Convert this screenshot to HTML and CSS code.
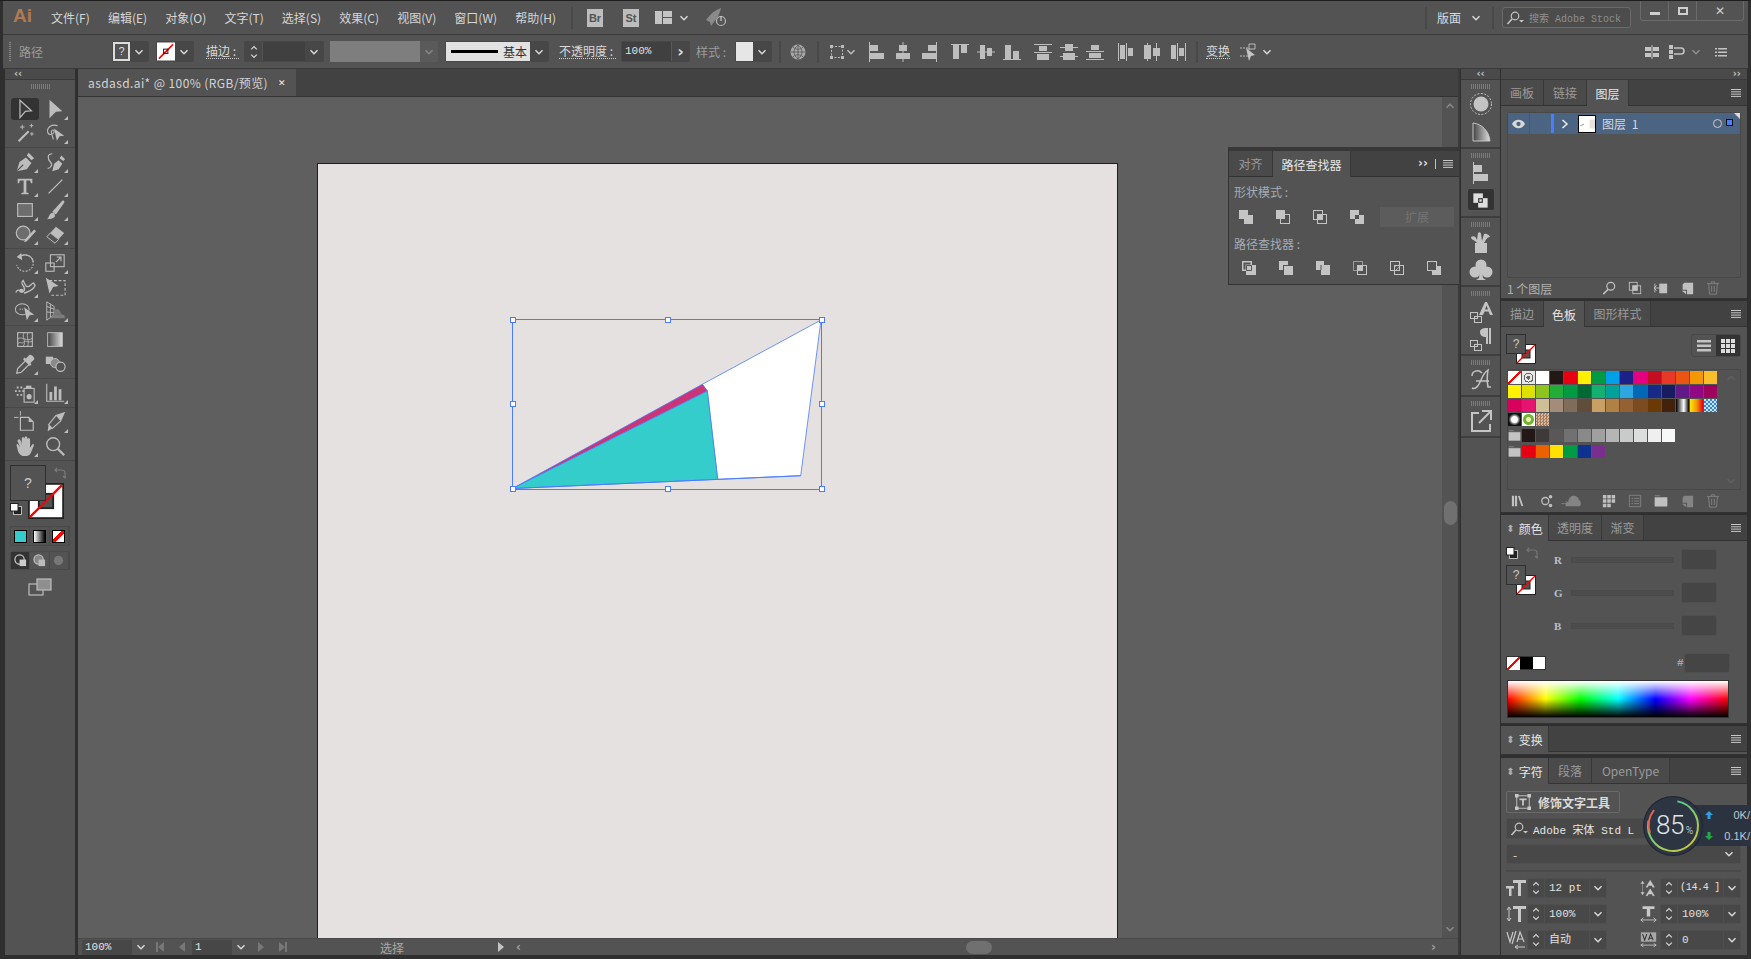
FILE: index.html
```html
<!DOCTYPE html>
<html lang="zh-CN">
<head>
    <meta charset="UTF-8">
    <title>asdasd.ai</title>
    <link rel="stylesheet" href="styles.css">
</head>
<body>
<svg class="sprite" xmlns="http://www.w3.org/2000/svg">
    <defs>
        <linearGradient id="gr" x1="0" x2="1" y1="0" y2="0"><stop offset="0" stop-color="#444"/><stop offset="1" stop-color="#ddd"/></linearGradient>
        <linearGradient id="ring" x1="0" x2="1" y1="1" y2="0"><stop offset="0" stop-color="#e3c53a"/><stop offset=".5" stop-color="#7ecb6a"/><stop offset="1" stop-color="#2fd0b5"/></linearGradient>
    </defs>
    <symbol id="chev" viewBox="0 0 10 10"><path d="M1.500 3.200 5 6.700 8.500 3.200" fill="none" stroke="currentColor" stroke-width="1.500"/></symbol>
    <symbol id="menu" viewBox="0 0 12 10"><path d="M1 1.500h10M1 3.800h10M1 6.100h10M1 8.400h10" stroke="currentColor"/></symbol>
    <!-- tools -->
    <symbol id="t-sel" viewBox="0 0 24 24"><path d="M6.500 2.500 19 14l-6.500.5-6 7z" fill="#3a3a3a" stroke="currentColor" stroke-width="1.300"/></symbol>
    <symbol id="t-dsel" viewBox="0 0 24 24"><path d="M6 2 20 14.500l-7 .5-7 7z" fill="currentColor"/></symbol>
    <symbol id="t-wand" viewBox="0 0 24 24"><path d="M5 21 16 10" stroke="currentColor" stroke-width="2.400"/><path d="M9 3v5M6.500 5.500h5M19 2v4M17 4h4M19.500 11v4M17.500 13h4" stroke="currentColor"/></symbol>
    <symbol id="t-lasso" viewBox="0 0 24 24"><path d="M15 4C8 2 3 6 4 11c1 4 6 3 7 0 .5-3-3-3-3 0 0 3 2 5 2 8" fill="none" stroke="currentColor" stroke-width="1.200"/><path d="M11 7l11 8-5 .5-3 5z" fill="currentColor"/></symbol>
    <symbol id="t-pen" viewBox="0 0 24 24"><path d="M3 22l3-10 7-5 6 6-5 7z" fill="currentColor"/><path d="M14 5l2-3 6 6-3 2z" fill="currentColor"/><path d="M3.500 21.500 10 15" stroke="#535353" stroke-width="1.200"/></symbol>
    <symbol id="t-curv" viewBox="0 0 24 24"><path d="M9 22l2-8 5-4 4 4-4 6zM17 8l2-3 4 4-2 2z" fill="currentColor"/><path d="M9 3C3 3 4 9 7 12c3 3 0 7-3 7" fill="none" stroke="currentColor" stroke-width="1.300"/></symbol>
    <symbol id="t-type" viewBox="0 0 24 24"><path d="M4 4h16v5h-1.500l-1-3H13.500v13l2.500.5V21H8v-1.500l2.500-.5V6H6.500l-1 3H4z" fill="currentColor"/></symbol>
    <symbol id="t-line" viewBox="0 0 24 24"><path d="M5 20 20 5" stroke="currentColor" stroke-width="1.400"/></symbol>
    <symbol id="t-rect" viewBox="0 0 24 24"><rect x="4" y="5" width="16" height="14" fill="#6d6d6d" stroke="currentColor" stroke-width="1.200"/></symbol>
    <symbol id="t-brush" viewBox="0 0 24 24"><path d="M9 14 20 2c2-1 2.500 1 2 2L13 17z" fill="currentColor"/><path d="M3 22c3-1 2-8 8-7l1 3c0 3-4 4-9 4z" fill="currentColor"/></symbol>
    <symbol id="t-shaper" viewBox="0 0 24 24"><circle cx="10" cy="11" r="7.500" fill="#6d6d6d" stroke="currentColor" stroke-width="1.300"/><path d="M12 18l10-11 2 2-10 11-3 1z" fill="currentColor"/></symbol>
    <symbol id="t-eraser" viewBox="0 0 24 24"><path d="M3 15 13 4l9 7-10 11z" fill="currentColor"/><path d="M3 15l4-4 9 7-4 4z" fill="#535353" stroke="currentColor"/></symbol>
    <symbol id="t-rot" viewBox="0 0 24 24"><path d="M6 5c6-4 14-1 15 6 .5 6-4 10-9 10s-8-3-9-7" fill="none" stroke="currentColor" stroke-width="1.200" stroke-dasharray="2 1.500"/><path d="M6 5c6-4 14-1 15 6" fill="none" stroke="currentColor" stroke-width="1.200"/><path d="M8 1 3 5.500 9 9z" fill="currentColor"/></symbol>
    <symbol id="t-scale" viewBox="0 0 24 24"><rect x="2" y="12" width="9" height="9" fill="none" stroke="currentColor" stroke-width="1.200"/><rect x="7" y="3" width="15" height="13" fill="none" stroke="currentColor" stroke-width="1.200"/><path d="M13 11l5-5M14 5.500h4.500V10" fill="none" stroke="currentColor" stroke-width="1.200"/></symbol>
    <symbol id="t-warp" viewBox="0 0 24 24"><path d="M2 18c3-7 6 3 9-2s-6-7-1-11c2 5 4 9 8 5s3-2 5 0c-1 6-9 7-12 9" fill="none" stroke="currentColor" stroke-width="1.500"/><circle cx="8" cy="16" r="2.200" fill="currentColor"/></symbol>
    <symbol id="t-free" viewBox="0 0 24 24"><path d="M6 5h17v16H6" fill="none" stroke="currentColor" stroke-width="1.200" stroke-dasharray="3 2"/><path d="M2 2l14 9-6 1-4 7z" fill="currentColor"/></symbol>
    <symbol id="t-build" viewBox="0 0 24 24"><ellipse cx="9" cy="10" rx="7.500" ry="6" fill="none" stroke="currentColor" stroke-width="1.100"/><path d="M6 10h5" stroke="currentColor" stroke-dasharray="1.500 1"/><path d="M11 8l11 8-5 .5-3 5.500z" fill="currentColor"/></symbol>
    <symbol id="t-persp" viewBox="0 0 24 24"><path d="M3 2v20l8-6V7zM3 7l8 3M3 13l8 1M7 4v15" fill="none" stroke="currentColor"/><path d="M11 16h11l1 4H6z" fill="#7d7d7d"/><path d="M11 10h5l4 6h-9z" fill="#777"/></symbol>
    <symbol id="t-mesh" viewBox="0 0 24 24"><rect x="4" y="4" width="16" height="15" fill="none" stroke="currentColor" stroke-width="1.200"/><path d="M4 11c5-4 10 4 16-1M11 4c-3 5 3 9-1 15M4 16c4-3 4 1 7-2 2-2 5 2 9-1M15 4c-2 4 2 9 0 15" fill="none" stroke="currentColor" stroke-width=".9"/></symbol>
    <symbol id="t-grad" viewBox="0 0 24 24"><rect x="4" y="4" width="16" height="15" fill="url(#gr)" stroke="currentColor"/></symbol>
    <symbol id="t-drop" viewBox="0 0 24 24"><path d="M3 22l1-5 9-9 4 4-9 9z" fill="none" stroke="currentColor" stroke-width="1.300"/><path d="M13 6l4-4c2-1 6 3 5 5l-4 4 1 2-2 1-7-7 1-2z" fill="currentColor"/></symbol>
    <symbol id="t-blend" viewBox="0 0 24 24"><rect x="2" y="4" width="8" height="8" fill="currentColor"/><circle cx="12" cy="11" r="5" fill="#8a8a8a" stroke="currentColor"/><circle cx="18" cy="15" r="5" fill="#535353" stroke="currentColor" stroke-width="1.300"/></symbol>
    <symbol id="t-spray" viewBox="0 0 24 24"><rect x="11" y="7" width="11" height="15" fill="none" stroke="currentColor" stroke-width="1.200"/><circle cx="16.500" cy="16" r="2.800" fill="currentColor"/><path d="M13 7V4h6v3z" fill="currentColor"/><path d="M3 5h2v2H3zM7 5h2v2H7zM1 9h2v2H1zM5 9h2v2H5zM9 9h2v2H9zM3 13h2v2H3zM7 13h2v2H7z" fill="currentColor"/></symbol>
    <symbol id="t-graph" viewBox="0 0 24 24"><path d="M3 2v19h19" fill="none" stroke="currentColor" stroke-width="1.200"/><path d="M6 11h3v9H6zM11 5h3v15h-3zM16 8h3v12h-3z" fill="currentColor"/></symbol>
    <symbol id="t-board" viewBox="0 0 24 24"><path d="M0 7h5M7 0v5" stroke="currentColor"/><path d="M7 7h9l5 5v9H7z" fill="none" stroke="currentColor" stroke-width="1.300"/><path d="M16 7l5 5h-5z" fill="currentColor"/></symbol>
    <symbol id="t-knife" viewBox="0 0 24 24"><path d="M22 2 13 5 5 15l4 4 9-8z" fill="none" stroke="currentColor" stroke-width="1.200"/><path d="M9 19l-5 3 1-7M22 2l-9 3 5 6z" fill="currentColor"/></symbol>
    <symbol id="t-hand" viewBox="0 0 24 24"><path d="M5 5c1-1 2 0 3 3l.5 3V4c0-2 2.500-2 3 0v7V3c0-2 3-2 3 0v8-6c0-2 3-2 3 0v9l2-3c1-2 3-1 2 1l-3 7c-1 3-3 4-7 4-3 0-5-1-7-5L3 12c-1-2 1-3 2-1l2 3-3-7c-.5-1 .5-2 1-2z" fill="currentColor"/></symbol>
    <symbol id="t-zoom" viewBox="0 0 24 24"><circle cx="10" cy="10" r="7" fill="none" stroke="currentColor" stroke-width="1.500"/><path d="M15 15l7 7" stroke="currentColor" stroke-width="2.400"/></symbol>
    <symbol id="t-boards" viewBox="0 0 24 18"><rect x="1" y="6" width="14" height="11" fill="none" stroke="currentColor" stroke-width="1.200"/><rect x="9" y="1" width="14" height="11" fill="#8f8f8f" stroke="currentColor" stroke-width="1.200"/></symbol>
    <!-- fill and stroke -->
    <symbol id="nostroke" viewBox="0 0 20 20"><rect x=".5" y=".5" width="19" height="19" fill="#fff" stroke="#222"/><rect x="6" y="6" width="8" height="8" fill="#535353" stroke="#222"/><path d="M1 19 19 1" stroke="#f00" stroke-width="1.300"/></symbol>
    <symbol id="deffs" viewBox="0 0 12 12"><rect x="3.500" y="3.500" width="8" height="8" fill="#222" stroke="#ddd" stroke-width=".8"/><rect x=".5" y=".5" width="7.500" height="7.500" fill="#fff" stroke="#222"/></symbol>
    <symbol id="swap" viewBox="0 0 12 12"><path d="M1 3h7c2 0 3 1 3 3v5M3 1 1 3l2 2M9 9l2 2 1-2" fill="none" stroke="currentColor" stroke-width="1.200"/></symbol>
    <!-- align row -->
    <symbol id="a1" viewBox="0 0 20 20"><path d="M2 0h1v20H2zM3 3h8v6H3zM3 11h14v6H3z" fill="currentColor"/></symbol>
    <symbol id="a2" viewBox="0 0 20 20"><path d="M9.500 0h1v20h-1zM6 3h8v6H6zM3 11h14v6H3z" fill="currentColor"/></symbol>
    <symbol id="a3" viewBox="0 0 20 20"><path d="M17 0h1v20h-1zM9 3h8v6H9zM3 11h14v6H3z" fill="currentColor"/></symbol>
    <symbol id="a4" viewBox="0 0 20 20"><path d="M1 2h18v1H1zM3 3h6v14H3zM11 3h6v8h-6z" fill="currentColor"/></symbol>
    <symbol id="a5" viewBox="0 0 20 20"><path d="M1 9.500h18v1H1zM4 3h5v14H4zM11 6h5v8h-5z" fill="currentColor"/></symbol>
    <symbol id="a6" viewBox="0 0 20 20"><path d="M1 17h18v1H1zM3 3h6v14H3zM11 9h6v8h-6z" fill="currentColor"/></symbol>
    <symbol id="d1" viewBox="0 0 20 20"><path d="M1 2h18v1H1zM1 10h18v1H1zM6 4h8v5H6zM4 12h12v6H4z" fill="currentColor"/></symbol>
    <symbol id="d2" viewBox="0 0 20 20"><path d="M1 5h18v1H1zM1 14h18v1H1zM6 2h8v7H6zM4 11h12v7H4z" fill="currentColor"/></symbol>
    <symbol id="d3" viewBox="0 0 20 20"><path d="M1 9h18v1H1zM1 17h18v1H1zM6 3h8v5H6zM4 11h12v5H4z" fill="currentColor"/></symbol>
    <symbol id="d4" viewBox="0 0 20 20"><path d="M2 1h1v18H2zM10 1h1v18h-1zM4 3h5v14H4zM12 6h5v8h-5z" fill="currentColor"/></symbol>
    <symbol id="d5" viewBox="0 0 20 20"><path d="M5 1h1v18H5zM14 1h1v18h-1zM2 3h7v14H2zM11 6h7v8h-7z" fill="currentColor"/></symbol>
    <symbol id="d6" viewBox="0 0 20 20"><path d="M9 1h1v18H9zM17 1h1v18h-1zM3 3h5v14H3zM11 6h5v8h-5z" fill="currentColor"/></symbol>
    <!-- pathfinder -->
    <symbol id="p1" viewBox="0 0 16 16"><path d="M1 1h9v5h5v9H6v-5H1z" fill="currentColor"/></symbol>
    <symbol id="p2" viewBox="0 0 16 16"><rect x="5.500" y="5.500" width="9" height="9" fill="none" stroke="currentColor"/><rect x="1" y="1" width="9" height="9" fill="currentColor"/></symbol>
    <symbol id="p3" viewBox="0 0 16 16"><rect x="1.500" y="1.500" width="9" height="9" fill="none" stroke="currentColor"/><rect x="5.500" y="5.500" width="9" height="9" fill="none" stroke="currentColor"/><rect x="6" y="6" width="4" height="4" fill="currentColor"/></symbol>
    <symbol id="p4" viewBox="0 0 16 16"><path d="M1 1h9v5h5v9H6v-5H1zM6 6v4h4V6z" fill="currentColor" fill-rule="evenodd"/></symbol>
    <symbol id="p5" viewBox="0 0 16 16"><path d="M1 1h10v4h4v10H5v-4H1z" fill="currentColor"/><path d="M5.500 5.500h5v5h-5z" fill="none" stroke="#535353"/><path d="M2.500 2.500h7v2h-5v5h-2z" fill="#535353"/></symbol>
    <symbol id="p6" viewBox="0 0 16 16"><path d="M1 1h9v4H5v5H1z" fill="currentColor"/><path d="M6 6h9v9H6z" fill="currentColor"/></symbol>
    <symbol id="p7" viewBox="0 0 16 16"><path d="M1 1h8v4h6v10H6v-5H1z" fill="currentColor"/><path d="M6 5v5" stroke="#535353"/></symbol>
    <symbol id="p8" viewBox="0 0 16 16"><rect x="1.500" y="1.500" width="9" height="9" fill="none" stroke="#999"/><rect x="5.500" y="5.500" width="9" height="9" fill="none" stroke="currentColor"/><rect x="5" y="5" width="6" height="6" fill="currentColor"/></symbol>
    <symbol id="p9" viewBox="0 0 16 16"><rect x="1.500" y="1.500" width="9" height="9" fill="none" stroke="currentColor"/><rect x="5.500" y="5.500" width="9" height="9" fill="none" stroke="currentColor"/><path d="M5 8l3-3M6 11l5-5" stroke="currentColor" stroke-width=".7"/></symbol>
    <symbol id="p10" viewBox="0 0 16 16"><path d="M6 6h9v9H6z" fill="currentColor"/><rect x="1.500" y="1.500" width="9" height="9" fill="#535353" stroke="currentColor"/></symbol>
    <!-- dock strip -->
    <symbol id="k1" viewBox="0 0 24 24"><circle cx="12" cy="12" r="7.500" fill="currentColor"/><circle cx="12" cy="12" r="10.500" fill="none" stroke="currentColor" stroke-dasharray="2 1.500"/></symbol>
    <symbol id="k2" viewBox="0 0 24 24"><path d="M4 3c9 1 16 8 17 18H4z" fill="url(#gr)" stroke="currentColor"/></symbol>
    <symbol id="k3" viewBox="0 0 24 24"><path d="M4 1h1v22H4zM5 4h8v7H5zM5 13h14v7H5z" fill="currentColor"/></symbol>
    <symbol id="k4" viewBox="0 0 24 24"><path d="M3 3h12v12H3z" fill="#ddd"/><path d="M9 9h12v12H9z" fill="#ddd"/><path d="M9 9h6v6H9z" fill="#333"/><path d="M10.500 10.500h3v3h-3z" fill="#ddd"/></symbol>
    <symbol id="k5" viewBox="0 0 24 24"><path d="M6 13h12v10H6z" fill="currentColor"/><path d="M8 13C6 10 2 10 2 7c3-2 5 0 6 3L9 3c2-2 3 0 3 1l1 7 2-7c3-1 6 2 6 3-3 0-4 3-6 6z" fill="currentColor"/></symbol>
    <symbol id="k6" viewBox="0 0 24 24"><circle cx="12" cy="7" r="5.500" fill="currentColor"/><circle cx="6" cy="14" r="5.500" fill="currentColor"/><circle cx="18" cy="14" r="5.500" fill="currentColor"/><path d="M11 12h2l1 8 3 2H7l3-2z" fill="currentColor"/></symbol>
    <symbol id="k7" viewBox="0 0 24 24"><path d="M10 16 16 3h2l6 13h-3l-1.500-3.500h-4L14 16zM16 10.500h3l-1.500-4z" fill="currentColor"/><rect x="1.500" y="13.500" width="7" height="6" fill="none" stroke="currentColor"/><rect x="5.500" y="17.500" width="7" height="6" fill="none" stroke="currentColor"/></symbol>
    <symbol id="k8" viewBox="0 0 24 24"><path d="M20 1h2v16h-2zM17 1h2v16h-2zM17 1v9c-4 0-6-2-6-5s3-4 6-4z" fill="currentColor"/><rect x="1.500" y="13.500" width="7" height="6" fill="none" stroke="currentColor"/><rect x="5.500" y="17.500" width="7" height="6" fill="none" stroke="currentColor"/></symbol>
    <symbol id="k9" viewBox="0 0 24 24"><path d="M3 20c4 2 7-3 9-8s4-8 7-10c-1 6-1 12 0 17h3M7 13h13M13 5C9 1 3 3 3 8" fill="none" stroke="currentColor" stroke-width="1.500"/></symbol>
    <symbol id="k10" viewBox="0 0 24 24"><path d="M10 4H3v18h18v-7" fill="none" stroke="currentColor" stroke-width="2"/><path d="M10 14 21 3M13 2h9v9" fill="none" stroke="currentColor" stroke-width="2"/></symbol>
    <!-- panel footers -->
    <symbol id="f-find" viewBox="0 0 16 16"><circle cx="10" cy="6" r="4.500" fill="none" stroke="currentColor" stroke-width="1.400"/><path d="M7 9.500 1.500 15" stroke="currentColor" stroke-width="1.800"/></symbol>
    <symbol id="f-sub" viewBox="0 0 16 16"><rect x="1.500" y="1.500" width="9" height="9" fill="none" stroke="currentColor"/><rect x="5" y="5" width="6" height="6" fill="currentColor"/><rect x="5.500" y="5.500" width="9" height="9" fill="none" stroke="currentColor"/></symbol>
    <symbol id="f-move" viewBox="0 0 16 16"><path d="M6 3h9v11H6z" fill="currentColor"/><path d="M0 8h8M3 5 0 8l3 3M1 3v10" fill="none" stroke="currentColor"/></symbol>
    <symbol id="f-new" viewBox="0 0 16 16"><path d="M5 2h10v13H8v-5H3V4z" fill="currentColor"/><path d="M2 11h5v4z" fill="currentColor"/></symbol>
    <symbol id="f-trash" viewBox="0 0 16 16"><path d="M1 3h14M6 3V1h4v2M3 3l1 12h8l1-12M6.500 5.500v7M9.500 5.500v7" fill="none" stroke="currentColor"/></symbol>
    <symbol id="f-libs" viewBox="0 0 16 16"><path d="M1 2h2.500v12H1zM4.500 2H7v12H4.500zM8 2.500l2-.5 4 11.500-2 .5z" fill="currentColor"/></symbol>
    <symbol id="f-link" viewBox="0 0 16 16"><circle cx="6" cy="8" r="4" fill="none" stroke="currentColor" stroke-width="1.500"/><circle cx="12" cy="3" r="2" fill="currentColor"/><circle cx="12" cy="13" r="2" fill="currentColor"/></symbol>
    <symbol id="f-cloud" viewBox="0 0 24 16"><path d="M8 14c-3 0-3-5 1-5 0-4 3-7 6-7 4 0 6 3 6 5 3 0 3 7 0 7z" fill="currentColor"/><path d="M1 11h8M6 8l3 3-3 3" fill="none" stroke="currentColor"/></symbol>
    <symbol id="f-grid" viewBox="0 0 16 16"><path d="M1 1h4v4H1zM6 1h4v4H6zM11 1h4v4h-4zM1 6h4v4H1zM6 6h4v4H6zM11 6h4v4h-4zM1 11h4v4H1zM6 11h4v4H6z" fill="currentColor"/></symbol>
    <symbol id="f-list" viewBox="0 0 16 16"><path d="M1.500 1.500h13v13h-13zM4 5h2M7 5h6M4 8h2M7 8h6M4 11h2M7 11h6" fill="none" stroke="currentColor"/></symbol>
    <symbol id="f-folder" viewBox="0 0 16 14"><path d="M1 1h6M1 3h14v10H1z" fill="currentColor" stroke="currentColor" stroke-width=".5"/></symbol>
    <symbol id="search" viewBox="0 0 18 14"><circle cx="9" cy="5" r="3.800" fill="none" stroke="currentColor" stroke-width="1.200"/><path d="M6 8 1.500 13" stroke="currentColor" stroke-width="1.600"/><path d="M13 9h5l-2.500 2.500z" fill="currentColor"/></symbol>
</svg>

<div class="app">
    <!-- menu bar -->
    <div class="menubar">
        <span class="logo">Ai</span>
        <nav class="menus">
            <span>文件(F)</span><span>编辑(E)</span><span>对象(O)</span><span>文字(T)</span><span>选择(S)</span><span>效果(C)</span><span>视图(V)</span><span>窗口(W)</span><span>帮助(H)</span>
        </nav>
        <i class="vsep sep-bridge"></i>
        <span class="appicon app-br">Br</span>
        <span class="appicon app-st">St</span>
        <svg class="layouticon" viewBox="0 0 17 13"><path d="M0 0h7v13H0zM8 0h9v6H8zM8 7h9v6H8z" fill="#c4c4c4"/></svg>
        <svg class="chev layoutchev"><use href="#chev"/></svg>
        <svg class="rocket" viewBox="0 0 22 20"><path d="M1 12C5 6 10 2 16 0c-1 5-3 9-7 14l-3 4-1-4z" fill="#8a8a8a"/><circle cx="16" cy="13" r="4.500" fill="#565656" stroke="#bbb" stroke-width="1.200"/><path d="M16 8v5" stroke="#ccc" stroke-width="1.200"/></svg>
        <i class="vsep sep-workspace"></i>
        <span class="workspace-name">版面</span>
        <svg class="chev"><use href="#chev"/></svg>
        <i class="vsep sep-search"></i>
        <div class="searchbox"><svg class="searchicon"><use href="#search"/></svg>搜索 Adobe Stock</div>
        <div class="winbtns">
            <span class="winbtn btn-min"><i></i></span>
            <span class="winbtn btn-max"><i></i></span>
            <span class="winbtn btn-close">✕</span>
        </div>
    </div>

    <!-- control bar -->
    <div class="controlbar">
        <i class="grip-v"></i>
        <span class="pathname">路径</span>
        <div class="group grp-fill">
            <span class="qbox">?</span><span class="drop"><svg class="chev"><use href="#chev"/></svg></span>
        </div>
        <div class="group grp-stroke">
            <svg class="strokebox" viewBox="0 0 19 19"><rect width="19" height="19" fill="#fff"/><path d="M2 17 17 2" stroke="#f00" stroke-width="1.600"/><rect x="7" y="7" width="4.500" height="4.500" fill="none" stroke="#111"/></svg><span class="drop"><svg class="chev"><use href="#chev"/></svg></span>
        </div>
        <span class="lbl lbl-stroke">描边 :</span>
        <div class="group grp-weight">
            <span class="stepper"><svg class="chev up"><use href="#chev"/></svg><svg class="chev"><use href="#chev"/></svg></span>
            <span class="field fw-44"></span>
            <span class="drop"><svg class="chev"><use href="#chev"/></svg></span>
        </div>
        <div class="variable"><span class="greybox"></span><span class="drop off"><svg class="chev"><use href="#chev"/></svg></span></div>
        <div class="group grp-style">
            <span class="brushbox"><i></i><b>基本</b></span>
            <span class="drop"><svg class="chev"><use href="#chev"/></svg></span>
        </div>
        <span class="lbl lbl-opacity">不透明度 :</span>
        <div class="group grp-opacity"><span class="field fw-51">100%</span><span class="drop arrow">›</span></div>
        <span class="lbl-plain">样式 :</span>
        <div class="group grp-swatch"><span class="stylebox"></span><span class="drop"><svg class="chev"><use href="#chev"/></svg></span></div>
        <i class="vsep sep-globe"></i>
        <svg class="globe" viewBox="0 0 16 16"><circle cx="8" cy="8" r="7.500" fill="#a8a8a8"/><path d="M8 1v14M1 8h14M3 3c3 3 7 3 10 0M3 13c3-3 7-3 10 0M4 8c0-3 2-5 4-7M12 8c0-3-2-5-4-7M4 8c0 3 2 5 4 7M12 8c0 3-2 5-4 7" fill="none" stroke="#555" stroke-width=".8"/></svg>
        <i class="vsep sep-globe2"></i>
        <svg class="reficon" viewBox="0 0 14 16"><path d="M1.500 2.500h11v11h-11z" fill="none" stroke="#bbb" stroke-dasharray="2 1.500"/><path d="M0 1h3v3H0zM11 1h3v3h-3zM0 12h3v3H0zM11 12h3v3h-3z" fill="#bbb"/></svg>
        <svg class="chev refchev"><use href="#chev"/></svg>
        <div class="aligns">
            <svg class="ai"><use href="#a1"/></svg><svg class="ai"><use href="#a2"/></svg><svg class="ai"><use href="#a3"/></svg>
        </div>
        <div class="aligns">
            <svg class="ai"><use href="#a4"/></svg><svg class="ai"><use href="#a5"/></svg><svg class="ai"><use href="#a6"/></svg>
        </div>
        <div class="aligns">
            <svg class="ai"><use href="#d1"/></svg><svg class="ai"><use href="#d2"/></svg><svg class="ai"><use href="#d3"/></svg>
        </div>
        <div class="aligns">
            <svg class="ai"><use href="#d4"/></svg><svg class="ai"><use href="#d5"/></svg><svg class="ai"><use href="#d6"/></svg>
        </div>
        <i class="vsep sep-transform"></i>
        <span class="lbl lbl-transform">变换</span>
        <svg class="transicon" viewBox="0 0 18 18"><path d="M1 5h9v8H1" fill="none" stroke="#bbb" stroke-dasharray="2 1"/><path d="M10 1h6v5h-6z" fill="none" stroke="#bbb"/><path d="M7 5l9 7-4 1-2 5z" fill="#c4c4c4"/></svg>
        <svg class="chev"><use href="#chev"/></svg>
        <svg class="ricon ric-a" viewBox="0 0 14 14"><path d="M0 2h6v4H0zM8 2h6v4H8zM0 8h6v4H0zM8 8h6v4H8zM6.500 0h1v14h-1z" fill="#c4c4c4"/></svg>
        <svg class="ricon ric-b" viewBox="0 0 16 14"><path d="M0 0h4v4H0zM0 5h4v4H0zM0 10h4v4H0z" fill="#c4c4c4"/><path d="M5 3h7a2 2 0 0 1 0 6H5" fill="none" stroke="#c4c4c4" stroke-width="1.600"/></svg>
        <svg class="chev dim"><use href="#chev"/></svg>
        <svg class="ricon ric-c" viewBox="0 0 12 10"><path d="M0 1h2v1.500H0zM3 1h9v1.500H3zM0 4.500h2V6H0zM3 4.500h9V6H3zM0 8h2v1.500H0zM3 8h9v1.500H3z" fill="#c4c4c4"/></svg>
    </div>

    <div class="workspace">
        <!-- tools -->
        <aside class="tools">
            <div class="collapse">‹‹</div>
            <i class="grip"></i>
            <div class="toolgroup first">
                <span class="tool on"><svg><use href="#t-sel"/></svg></span><span class="tool more"><svg><use href="#t-dsel"/></svg></span>
                <span class="tool"><svg><use href="#t-wand"/></svg></span><span class="tool more"><svg><use href="#t-lasso"/></svg></span>
            </div>
            <div class="toolgroup">
                <span class="tool more"><svg><use href="#t-pen"/></svg></span><span class="tool more"><svg><use href="#t-curv"/></svg></span>
                <span class="tool more"><svg><use href="#t-type"/></svg></span><span class="tool more"><svg><use href="#t-line"/></svg></span>
                <span class="tool more"><svg><use href="#t-rect"/></svg></span><span class="tool more"><svg><use href="#t-brush"/></svg></span>
                <span class="tool more"><svg><use href="#t-shaper"/></svg></span><span class="tool more"><svg><use href="#t-eraser"/></svg></span>
            </div>
            <div class="toolgroup">
                <span class="tool more"><svg><use href="#t-rot"/></svg></span><span class="tool more"><svg><use href="#t-scale"/></svg></span>
                <span class="tool more"><svg><use href="#t-warp"/></svg></span><span class="tool"><svg><use href="#t-free"/></svg></span>
                <span class="tool more"><svg><use href="#t-build"/></svg></span><span class="tool more"><svg><use href="#t-persp"/></svg></span>
            </div>
            <div class="toolgroup">
                <span class="tool"><svg><use href="#t-mesh"/></svg></span><span class="tool"><svg><use href="#t-grad"/></svg></span>
                <span class="tool more"><svg><use href="#t-drop"/></svg></span><span class="tool"><svg><use href="#t-blend"/></svg></span>
            </div>
            <div class="toolgroup">
                <span class="tool more"><svg><use href="#t-spray"/></svg></span><span class="tool more"><svg><use href="#t-graph"/></svg></span>
            </div>
            <div class="toolgroup">
                <span class="tool"><svg><use href="#t-board"/></svg></span><span class="tool more"><svg><use href="#t-knife"/></svg></span>
                <span class="tool more"><svg><use href="#t-hand"/></svg></span><span class="tool"><svg><use href="#t-zoom"/></svg></span>
            </div>
            <div class="fillstroke">
                <svg class="fs-stroke"><use href="#nostroke"/></svg>
                <span class="fs-fill">?</span>
                <svg class="fs-def"><use href="#deffs"/></svg>
                <svg class="fs-swap"><use href="#swap"/></svg>
            </div>
            <div class="modes">
                <span class="mode"><i class="m-color"></i></span>
                <span class="mode"><i class="m-grad"></i></span>
                <span class="mode"><i class="m-none"></i></span>
            </div>
            <div class="modes screens">
                <span class="mode on"><svg viewBox="0 0 14 14"><circle cx="6" cy="6" r="5" fill="none" stroke="#ccc" stroke-width="1.300"/><rect x="6" y="6" width="7" height="7" fill="#ccc"/></svg></span>
                <span class="mode"><svg viewBox="0 0 14 14"><circle cx="6" cy="6" r="5" fill="#888" stroke="#bbb" stroke-width="1.300"/><rect x="6" y="6" width="7" height="7" fill="#bbb"/></svg></span>
                <span class="mode"><svg viewBox="0 0 14 14"><circle cx="7" cy="7" r="5" fill="#777"/></svg></span>
            </div>
            <svg class="boards"><use href="#t-boards"/></svg>
        </aside>

        <!-- document -->
        <main class="doc">
            <div class="doctabs">
                <div class="doctab">asdasd.ai* @ 100% (RGB/预览)<b>✕</b></div>
            </div>
            <div class="docmid">
                <div class="canvas">
                    <div class="artboard">
                        <svg class="art" viewBox="0 0 320 180">
                            <!-- coordinates are artboard pixels minus 505,315 -->
                            <path d="M197.300 69.300 316 5 295.700 160.700 212.700 164.300 202.300 76z" fill="#fff" stroke="#4a7cff" stroke-width=".8"/>
                            <path d="M7.500 173.500 197.300 69.300 202.300 76z" fill="#cb3577" stroke="#4a7cff" stroke-width=".8"/>
                            <path d="M7.500 173.500 202.300 76 212.700 164.300z" fill="#35cdcb" stroke="#4a7cff" stroke-width=".8"/>
                            <path d="M7.500 173.500 295.700 160.700" fill="none" stroke="#4a7cff"/>
                            <rect x="7.500" y="4.500" width="309" height="170" fill="none" stroke="#4a7cff"/>
                            <g fill="#fff" stroke="#4a7cff">
                                <rect x="5.500" y="2.500" width="5" height="5"/><rect x="160.500" y="2.500" width="5" height="5"/><rect x="314.500" y="2.500" width="5" height="5"/>
                                <rect x="5.500" y="86.500" width="5" height="5"/><rect x="314.500" y="86.500" width="5" height="5"/>
                                <rect x="5.500" y="171.500" width="5" height="5"/><rect x="160.500" y="171.500" width="5" height="5"/><rect x="314.500" y="171.500" width="5" height="5"/>
                            </g>
                        </svg>
                    </div>
                </div>
                <div class="vscroll">
                    <svg class="chev up"><use href="#chev"/></svg>
                    <i class="vthumb"></i>
                    <svg class="chev"><use href="#chev"/></svg>
                </div>
                <!-- floating pathfinder panel -->
                <section class="floatpanel">
                    <div class="tabs tabs-float">
                        <span class="tab tab-align">对齐</span>
                        <span class="tab on tab-pf">路径查找器</span>
                        <span class="more-r">››</span><i class="barsep"></i>
                        <svg class="menuicon"><use href="#menu"/></svg>
                    </div>
                    <div class="pf-body">
                        <div class="pf-title">形状模式 :</div>
                        <div class="pf-row modes-row">
                            <svg class="pf"><use href="#p1"/></svg><svg class="pf"><use href="#p2"/></svg><svg class="pf"><use href="#p3"/></svg><svg class="pf"><use href="#p4"/></svg>
                            <span class="expand">扩展</span>
                        </div>
                        <div class="pf-title">路径查找器 :</div>
                        <div class="pf-row finders-row">
                            <svg class="pf"><use href="#p5"/></svg><svg class="pf"><use href="#p6"/></svg><svg class="pf"><use href="#p7"/></svg><svg class="pf"><use href="#p8"/></svg><svg class="pf"><use href="#p9"/></svg><svg class="pf"><use href="#p10"/></svg>
                        </div>
                    </div>
                </section>
            </div>
            <div class="statusbar">
                <span class="stfield zoomf">100%</span><span class="stdrop"><svg class="chev"><use href="#chev"/></svg></span>
                <span class="navs"><i class="nav-first"></i><i class="nav-prev"></i></span>
                <span class="stfield pagef">1</span><span class="stdrop"><svg class="chev"><use href="#chev"/></svg></span>
                <span class="navs"><i class="nav-next"></i><i class="nav-last"></i></span>
                <span class="statetext">选择</span>
                <i class="playbtn"></i>
                <span class="hscroll"><span>‹</span><i class="hthumb"></i><span>›</span></span>
            </div>
        </main>

        <!-- collapsed icon dock -->
        <div class="dock">
            <div class="collapse center">‹‹</div>
            <div class="dockgroup tall"><i class="grip"></i><svg><use href="#k1"/></svg><svg><use href="#k2"/></svg></div>
            <div class="dockgroup tall"><i class="grip"></i><svg><use href="#k3"/></svg><span class="dockon"><svg><use href="#k4"/></svg></span></div>
            <div class="dockgroup tall"><i class="grip"></i><svg><use href="#k5"/></svg><svg><use href="#k6"/></svg></div>
            <div class="dockgroup tall"><i class="grip"></i><svg><use href="#k7"/></svg><svg><use href="#k8"/></svg></div>
            <div class="dockgroup"><i class="grip"></i><svg><use href="#k9"/></svg></div>
            <div class="dockgroup"><i class="grip"></i><svg><use href="#k10"/></svg></div>
        </div>

        <!-- right panels -->
        <div class="panels">
            <div class="collapse right">››</div>

            <section class="panel p-layers">
                <div class="tabs">
                    <span class="tab w43">画板</span><span class="tab w43">链接</span><span class="tab on w42">图层</span>
                    <svg class="menuicon"><use href="#menu"/></svg>
                </div>
                <div class="layerlist">
                    <div class="layerrow">
                        <svg class="eye" viewBox="0 0 14 10"><path d="M0 5c3-6 11-6 14 0-3 6-11 6-14 0z" fill="#d8d8d8"/><circle cx="7" cy="5" r="2.300" fill="#4b6482"/></svg>
                        <i class="cell"></i>
                        <i class="colorbar"></i>
                        <svg class="laychev" viewBox="0 0 8 10"><path d="M1.500 1 6 5 1.500 9" fill="none" stroke="#eee" stroke-width="1.500"/></svg>
                        <svg class="thumb" viewBox="0 0 18 18"><rect width="18" height="18" fill="#fff"/><rect x="12" y="4" width="6" height="10" fill="#e5e1e0"/><rect x="1" y="10" width="3" height="1" fill="#35cdcb"/><rect x="4" y="9" width="1" height="1" fill="#333"/></svg>
                        <span class="layername">图层 1</span>
                        <i class="target"></i>
                        <i class="selsq"></i>
                        <i class="dogear"></i>
                    </div>
                </div>
                <div class="layerfoot">
                    <span class="count">1 个图层</span>
                    <svg class="fi"><use href="#f-find"/></svg><svg class="fi"><use href="#f-sub"/></svg><svg class="fi"><use href="#f-move"/></svg><svg class="fi"><use href="#f-new"/></svg><svg class="fi dim"><use href="#f-trash"/></svg>
                </div>
            </section>

            <section class="panel p-swatches">
                <div class="tabs">
                    <span class="tab w43">描边</span><span class="tab on w41">色板</span><span class="tab w66">图形样式</span>
                    <svg class="menuicon"><use href="#menu"/></svg>
                </div>
                <div class="swhead">
                    <div class="fsmini"><svg class="fm-stroke"><use href="#nostroke"/></svg><span class="fm-fill">?</span></div>
                    <div class="viewtoggle">
                        <span><svg viewBox="0 0 14 12"><path d="M0 0h14v2.500H0zM0 4.500h14V7H0zM0 9h14v2.500H0z" fill="#c4c4c4"/></svg></span>
                        <span class="on"><svg viewBox="0 0 14 14"><path d="M0 0h4v4H0zM5 0h4v4H5zM10 0h4v4h-4zM0 5h4v4H0zM5 5h4v4H5zM10 5h4v4h-4zM0 10h4v4H0zM5 10h4v4H5zM10 10h4v4h-4z" fill="#ddd"/></svg></span>
                    </div>
                </div>
                <div class="swbox">
                    <div class="swrow">
                        <i class="sw none"></i><i class="sw reg"></i><i class="sw" style="background:#fff"></i><i class="sw" style="background:#231815"></i><i class="sw" style="background:#e60012"></i><i class="sw" style="background:#fff100"></i><i class="sw" style="background:#009944"></i><i class="sw" style="background:#00a0e9"></i><i class="sw" style="background:#1d2088"></i><i class="sw" style="background:#e4007f"></i><i class="sw" style="background:#c30d23"></i><i class="sw" style="background:#e83828"></i><i class="sw" style="background:#ea5514"></i><i class="sw" style="background:#f39800"></i><i class="sw" style="background:#fabe2c"></i>
                    </div>
                    <div class="swrow">
                        <i class="sw" style="background:#fff100"></i><i class="sw" style="background:#dde000"></i><i class="sw" style="background:#8fc31f"></i><i class="sw" style="background:#22ac38"></i><i class="sw" style="background:#009944"></i><i class="sw" style="background:#006934"></i><i class="sw" style="background:#13b06f"></i><i class="sw" style="background:#00a29a"></i><i class="sw" style="background:#2ea7e0"></i><i class="sw" style="background:#0068b7"></i><i class="sw" style="background:#172a88"></i><i class="sw" style="background:#171c61"></i><i class="sw" style="background:#601986"></i><i class="sw" style="background:#920783"></i><i class="sw" style="background:#9e005d"></i>
                    </div>
                    <div class="swrow">
                        <i class="sw" style="background:#d7005a"></i><i class="sw" style="background:#e5156f"></i><i class="sw" style="background:#cfbf99"></i><i class="sw" style="background:#a38c79"></i><i class="sw" style="background:#7d6d59"></i><i class="sw" style="background:#5f4c3b"></i><i class="sw" style="background:#c8a063"></i><i class="sw" style="background:#b08144"></i><i class="sw" style="background:#946134"></i><i class="sw" style="background:#7c4b1f"></i><i class="sw" style="background:#6a3906"></i><i class="sw" style="background:#41220d"></i><i class="sw g-bw"></i><i class="sw g-fire"></i><i class="sw g-check"></i>
                    </div>
                    <div class="swrow">
                        <i class="sw g-dots"></i><i class="sw g-green"></i><i class="sw g-brown"></i>
                    </div>
                    <div class="swrow grp">
                        <svg class="folder"><use href="#f-folder"/></svg>
                        <i class="sw" style="background:#231815"></i><i class="sw" style="background:#3e3a39"></i><i class="sw" style="background:#595757"></i><i class="sw" style="background:#727171"></i><i class="sw" style="background:#898989"></i><i class="sw" style="background:#9fa0a0"></i><i class="sw" style="background:#b5b5b6"></i><i class="sw" style="background:#c9caca"></i><i class="sw" style="background:#dcdddd"></i><i class="sw" style="background:#efefef"></i><i class="sw" style="background:#f7f8f8"></i>
                    </div>
                    <div class="swrow grp">
                        <svg class="folder"><use href="#f-folder"/></svg>
                        <i class="sw" style="background:#e60012"></i><i class="sw" style="background:#eb6100"></i><i class="sw" style="background:#ffe100"></i><i class="sw" style="background:#009944"></i><i class="sw" style="background:#0f318f"></i><i class="sw" style="background:#7a2f8e"></i>
                    </div>
                    <svg class="chev swup up"><use href="#chev"/></svg>
                    <svg class="chev swdown"><use href="#chev"/></svg>
                </div>
                <div class="swfoot">
                    <svg class="fi libs"><use href="#f-libs"/></svg><svg class="fi"><use href="#f-link"/></svg><svg class="fi wide dim"><use href="#f-cloud"/></svg><svg class="fi gap"><use href="#f-grid"/></svg><svg class="fi dim"><use href="#f-list"/></svg><svg class="fi"><use href="#f-folder"/></svg><svg class="fi dim"><use href="#f-new"/></svg><svg class="fi dim"><use href="#f-trash"/></svg>
                </div>
            </section>

            <section class="panel p-color">
                <div class="tabs">
                    <span class="tab on w48"><em>⬍</em>颜色</span><span class="tab w53">透明度</span><span class="tab w42">渐变</span>
                    <svg class="menuicon"><use href="#menu"/></svg>
                </div>
                <div class="colorbody">
                    <div class="colorleft">
                        <div class="deflt"><svg class="fs-def2"><use href="#deffs"/></svg><svg class="swap2"><use href="#swap"/></svg></div>
                        <div class="fsmini"><svg class="fm-stroke"><use href="#nostroke"/></svg><span class="fm-fill">?</span></div>
                    </div>
                    <div class="sliders">
                        <div class="slider"><b>R</b><i class="track"></i><span class="inp"></span></div>
                        <div class="slider"><b>G</b><i class="track"></i><span class="inp"></span></div>
                        <div class="slider"><b>B</b><i class="track"></i><span class="inp"></span></div>
                    </div>
                </div>
                <div class="colorquick">
                    <span class="quick"><i class="sw none"></i><i class="qb"></i><i class="qw"></i></span>
                    <span class="hash">#</span><span class="hexinp"></span>
                </div>
                <div class="spectrum"><i></i></div>
            </section>

            <section class="panel p-transform">
                <div class="tabs">
                    <span class="tab on w48"><em>⬍</em>变换</span>
                    <svg class="menuicon"><use href="#menu"/></svg>
                </div>
            </section>

            <section class="panel p-char">
                <div class="tabs">
                    <span class="tab on w48"><em>⬍</em>字符</span><span class="tab w43">段落</span><span class="tab w78">OpenType</span>
                    <svg class="menuicon"><use href="#menu"/></svg>
                </div>
                <div class="charbody">
                    <div class="touchbtn">
                        <svg viewBox="0 0 18 18"><rect x="2" y="2" width="14" height="14" fill="none" stroke="#c8c8c8"/><path d="M0 0h4v4H0zM14 0h4v4h-4zM0 14h4v4H0zM14 14h4v4h-4z" fill="#c8c8c8"/><path d="M5 5h8v2h-3v6H8V7H5z" fill="#c8c8c8"/></svg>
                        修饰文字工具
                    </div>
                    <div class="fontfield"><svg class="searchicon"><use href="#search"/></svg>Adobe 宋体 Std L</div>
                    <div class="stylefield">-<svg class="chev"><use href="#chev"/></svg></div>
                    <i class="hr"></i>
                    <div class="chargrid">
                        <div class="cf">
                            <svg class="cficon" viewBox="0 0 20 20"><path d="M0 8h8v2.500H5.500V18H3V10.500H0zM7 2h13v3h-5v13h-3V5H7z" fill="#c8c8c8"/></svg>
                            <span class="stepper"><svg class="chev up"><use href="#chev"/></svg><svg class="chev"><use href="#chev"/></svg></span><span class="cfval">12 pt</span><span class="drop"><svg class="chev"><use href="#chev"/></svg></span>
                        </div>
                        <div class="cf">
                            <svg class="cficon" viewBox="0 0 20 20"><path d="M12 1l5 8h-2l-1-2h-4L9 9H7zM12 11l5 8h-2l-1-2h-4l-1 2H7zM3 2v16M1 5l2-3 2 3M1 15l2 3 2-3" fill="#c8c8c8" stroke="#c8c8c8" stroke-width=".5"/></svg>
                            <span class="stepper"><svg class="chev up"><use href="#chev"/></svg><svg class="chev"><use href="#chev"/></svg></span><span class="cfval tight">(14.4 ]</span><span class="drop"><svg class="chev"><use href="#chev"/></svg></span>
                        </div>
                        <div class="cf">
                            <svg class="cficon" viewBox="0 0 20 20"><path d="M3 3v14M1 6l2-3 2 3M1 14l2 3 2-3" fill="none" stroke="#c8c8c8"/><path d="M7 2h13v3h-5v13h-3V5H7z" fill="#c8c8c8"/></svg>
                            <span class="stepper"><svg class="chev up"><use href="#chev"/></svg><svg class="chev"><use href="#chev"/></svg></span><span class="cfval">100%</span><span class="drop"><svg class="chev"><use href="#chev"/></svg></span>
                        </div>
                        <div class="cf">
                            <svg class="cficon" viewBox="0 0 20 20"><path d="M3 1h14v3h-5v9H8V4H3z" fill="#c8c8c8"/><path d="M1 17h18M4 14.500 1 17l3 2.500M16 14.500l3 2.500-3 2.500" fill="none" stroke="#c8c8c8"/></svg>
                            <span class="stepper"><svg class="chev up"><use href="#chev"/></svg><svg class="chev"><use href="#chev"/></svg></span><span class="cfval">100%</span><span class="drop"><svg class="chev"><use href="#chev"/></svg></span>
                        </div>
                        <div class="cf">
                            <svg class="cficon" viewBox="0 0 20 20"><path d="M1 2l3 10 3-10M10 1 6 14M11 12l3-10 4 10M12 9h5" fill="none" stroke="#c8c8c8" stroke-width="1.200"/><path d="M9 17h10M12 15l-3 2 3 2" fill="none" stroke="#c8c8c8"/></svg>
                            <span class="stepper"><svg class="chev up"><use href="#chev"/></svg><svg class="chev"><use href="#chev"/></svg></span><span class="cfval">自动</span><span class="drop"><svg class="chev"><use href="#chev"/></svg></span>
                        </div>
                        <div class="cf">
                            <svg class="cficon" viewBox="0 0 20 20"><path d="M1 1h18v11H1z" fill="#a8a8a8"/><path d="M3 3l2.500 7L8 3M10 10l2.500-7 3 7M11 8h4" fill="none" stroke="#333" stroke-width="1.200"/><path d="M1 16h18M4 14l-3 2 3 2M16 14l3 2-3 2" fill="none" stroke="#c8c8c8"/></svg>
                            <span class="stepper"><svg class="chev up"><use href="#chev"/></svg><svg class="chev"><use href="#chev"/></svg></span><span class="cfval">0</span><span class="drop"><svg class="chev"><use href="#chev"/></svg></span>
                        </div>
                    </div>
                </div>
            </section>
        </div>
    </div>

    <!-- network speed widget floating over the char panel -->
    <div class="netpill">
        <span class="netrow"><svg class="netarrow net-up" viewBox="0 0 8 8"><path d="M4 0l4 4H5.500v4h-3V4H0z"/></svg><span>0K/</span></span>
        <span class="netrow"><svg class="netarrow net-down" viewBox="0 0 8 8"><path d="M4 8 0 4h2.500V0h3v4H8z"/></svg><span>0.1K/</span></span>
    </div>
    <div class="netball">
        <svg viewBox="0 0 58 58"><circle cx="29" cy="29" r="25" fill="none" stroke="url(#ring)" stroke-width="2" stroke-dasharray="118 40" transform="rotate(-80 29 29)"/><path d="M6 36A25 25 0 0 1 10 13" fill="none" stroke="#e8674a" stroke-width="2"/></svg>
        <span class="pct">85<small>%</small></span>
    </div>
</div>
</body>
</html>
```

FILE: styles.css
```css
*{
    margin: 0;
    padding: 0;
    box-sizing: border-box;
}
html,body{
    width: 1751px;
    height: 959px;
    overflow: hidden;
}
body{
    background: #2f2f2f;
    font: 12px "Noto Sans CJK SC", "Noto Sans", sans-serif;
    color: #c8c8c8;
}
i,em{
    font-style: normal;
}
.sprite{
    position: absolute;
    width: 0;
    height: 0;
}
.app{
    position: relative;
    display: flex;
    flex-direction: column;
    width: 1751px;
    height: 959px;
    border-top: 1px solid #1e1e1e;
}
.chev{
    flex: none;
    width: 10px;
    height: 10px;
    color: #d8d8d8;
}
.chev.up{
    transform: scaleY(-1);
}
.dim{
    opacity: .45;
}
.vsep{
    flex: none;
    width: 2px;
    height: 22px;
    background: #484848;
}

/* menu bar */
.menubar{
    display: flex;
    align-items: center;
    height: 33px;
    margin: 0 3px;
    background: #535353;
    flex: none;
}
.logo{
    width: 48px;
    padding-left: 10px;
    padding-bottom: 3px;
    font: bold 19px "Liberation Sans", sans-serif;
    color: #b07a52;
}
.menus{
    display: flex;
    width: 507px;
    justify-content: space-between;
    padding-right: 2px;
    padding-bottom: 1px;
    color: #d6d6d6;
}
.sep-bridge{
    margin-left: 13px;
}
.appicon{
    width: 16px;
    height: 18px;
    background: #bdbdbd;
    color: #555;
    font: bold 11px/18px "Liberation Sans", sans-serif;
    text-align: center;
}
.app-br{
    margin-left: 14px;
}
.app-st{
    margin-left: 20px;
}
.layouticon{
    width: 17px;
    height: 13px;
    margin-left: 16px;
}
.layoutchev{
    margin-left: 7px;
}
.rocket{
    width: 22px;
    height: 20px;
    margin-left: 16px;
}
.sep-workspace{
    margin-left: 698px;
}
.workspace-name{
    margin-left: 10px;
    color: #ddd;
}
.workspace-name + .chev{
    margin-left: 10px;
}
.sep-search{
    margin-left: 11px;
}
.searchbox{
    display: flex;
    align-items: center;
    width: 129px;
    height: 21px;
    margin-left: 8px;
    border: 1px solid #6a6a6a;
    border-radius: 3px;
    background: #4c4c4c;
    color: #8f8f8f;
    font: 10px "Liberation Mono", "Noto Sans CJK SC", monospace;
    white-space: nowrap;
}
.searchicon{
    flex: none;
    width: 18px;
    height: 14px;
    margin: 0 5px 0 3px;
    color: #c4c4c4;
}
.winbtns{
    display: flex;
    align-self: flex-start;
    height: 20px;
    margin-left: 9px;
    border: 1px solid #6a6a6a;
    border-top: 0;
    border-radius: 0 0 3px 3px;
    color: #cfcfcf;
}
.winbtn{
    display: flex;
    align-items: center;
    justify-content: center;
    width: 28px;
    border-right: 1px solid #6a6a6a;
    font: bold 12px "DejaVu Sans", sans-serif;
}
.btn-close{
    width: 46px;
    border: 0;
}
.btn-min i{
    width: 10px;
    height: 3px;
    margin-top: 6px;
    background: #cfcfcf;
}
.btn-max i{
    width: 10px;
    height: 8px;
    border: 2px solid #cfcfcf;
}

/* control bar */
.controlbar{
    display: flex;
    align-items: center;
    flex: none;
    height: 35px;
    margin: 0 3px;
    padding-left: 6px;
    background: #535353;
    border-top: 1px solid #3a3a3a;
    border-bottom: 1px solid #3a3a3a;
}
.grip-v{
    width: 2px;
    height: 20px;
    background: repeating-linear-gradient(#888 0 1px, transparent 1px 2px);
}
.pathname{
    width: 93px;
    margin-left: 8px;
    color: #9a9a9a;
}
.group{
    display: flex;
    align-items: stretch;
    height: 21px;
    border: 1px solid #484848;
    border-radius: 2px;
    background: #474747;
}
.drop{
    display: flex;
    align-items: center;
    justify-content: center;
    width: 18px;
    flex: none;
}
.qbox{
    width: 19px;
    background: #535353;
    border: 2px solid #ddd;
    color: #ddd;
    font: 11px/15px "Liberation Sans", sans-serif;
    text-align: center;
}
.strokebox{
    width: 19px;
    height: 19px;
}
.grp-fill{
    width: 37px;
    margin-left: 0;
}
.grp-stroke{
    width: 38px;
    margin-left: 7px;
}
.lbl{
    border-bottom: 1px dotted #ccc;
    line-height: 14px;
    color: #d8d8d8;
}
.lbl-stroke{
    margin-left: 12px;
    width: 33px;
    white-space: nowrap;
}
.grp-weight{
    width: 80px;
    margin-left: 5px;
}
.stepper{
    display: flex;
    flex-direction: column;
    justify-content: center;
    align-items: center;
    flex: none;
    width: 18px;
    border-right: 1px solid #535353;
}
.stepper .chev{
    height: 8px;
}
.field{
    background: #404040;
    color: #e0e0e0;
    padding-left: 3px;
    font: 11px/19px "Liberation Mono", monospace;
}
.fw-44{
    width: 44px;
}
.fw-51{
    width: 51px;
}
.variable{
    display: flex;
    height: 21px;
    margin-left: 6px;
}
.greybox{
    width: 90px;
    background: #7e7e7e;
}
.drop.off{
    background: #5a5a5a;
}
.drop.off .chev{
    opacity: .35;
}
.grp-style{
    width: 104px;
    margin-left: 7px;
}
.brushbox{
    display: flex;
    align-items: center;
    width: 85px;
    background: #e2e2e2;
    color: #333;
    padding-left: 5px;
}
.brushbox i{
    width: 47px;
    height: 3px;
    background: #000;
}
.brushbox b{
    margin-left: 5px;
    font-weight: 400;
}
.lbl-opacity{
    margin-left: 10px;
    width: 57px;
    white-space: nowrap;
}
.grp-opacity{
    width: 69px;
    margin-left: 5px;
}
.arrow{
    font: bold 16px/17px "DejaVu Sans", sans-serif;
    color: #ddd;
    border-left: 1px solid #5a5a5a;
}
.lbl-plain{
    width: 33px;
    margin-left: 6px;
    color: #9d9d9d;
    white-space: nowrap;
}
.stylebox{
    width: 19px;
    background: #e6e6e6;
}
.grp-swatch{
    width: 37px;
    margin-left: 6px;
}
.sep-globe{
    margin-left: 7px;
}
.globe{
    width: 16px;
    height: 16px;
    margin-left: 9px;
}
.sep-globe2{
    margin-left: 11px;
}
.reficon{
    width: 14px;
    height: 16px;
    margin-left: 11px;
}
.refchev{
    margin-left: 2px;
    opacity: .8;
}
.aligns{
    display: flex;
    gap: 6px;
    margin-left: 11px;
    color: #bdbdbd;
}
.ai{
    width: 20px;
    height: 20px;
}
.sep-transform{
    margin-left: 8px;
}
.lbl-transform{
    margin-left: 8px;
}
.transicon{
    width: 18px;
    height: 18px;
    margin-left: 9px;
}
.transicon + .chev{
    margin-left: 5px;
}
.ricon{
    height: 14px;
}
.ric-a{
    width: 14px;
    margin-left: 373px;
}
.ric-b{
    width: 16px;
    margin-left: 10px;
}
.ric-b + .chev{
    margin-left: 6px;
}
.ric-c{
    width: 12px;
    height: 10px;
    margin-left: 14px;
}

/* workspace */
.workspace{
    display: flex;
    flex: none;
    height: 886px;
    margin: 0 4px 0 5px;
    gap: 0;
}
.collapse{
    height: 11px;
    font: bold 10px/9px "DejaVu Sans", sans-serif;
    color: #c4c4c4;
    padding-left: 9px;
    background: #4a4a4a;
    border-bottom: 1px solid #3a3a3a;
}
.collapse.center{
    padding: 0;
    text-align: center;
}
.collapse.right{
    padding: 0 6px 0 0;
    text-align: right;
}
.grip{
    display: block;
    width: 19px;
    height: 5px;
    margin: 4px auto 0;
    background: repeating-linear-gradient(90deg, #7a7a7a 0 1px, transparent 1px 2px);
}

/* tools */
.tools{
    position: relative;
    flex: none;
    width: 70px;
    background: #535353;
}
.toolgroup{
    display: grid;
    grid-template-columns: 30px 30px;
    grid-auto-rows: 24px;
    padding: 2px 5px;
    margin: 0;
    border-bottom: 1px solid #484848;
}
.toolgroup.first{
    padding-top: 8px;
}
.tool{
    position: relative;
    display: flex;
    align-items: center;
    justify-content: center;
    color: #bdbdbd;
}
.tool svg{
    width: 22px;
    height: 22px;
}
.tool.on{
    background: #333;
    border-radius: 3px;
    margin: 1px;
}
.tool.more::after{
    content: "";
    position: absolute;
    right: 2px;
    bottom: 1px;
    border: 2px solid transparent;
    border-right-color: #bdbdbd;
    border-bottom-color: #bdbdbd;
}
.fillstroke{
    position: relative;
    height: 60px;
}
.fs-stroke{
    position: absolute;
    left: 23px;
    top: 22px;
    width: 36px;
    height: 36px;
}
.fs-fill{
    position: absolute;
    left: 5px;
    top: 4px;
    width: 36px;
    height: 36px;
    border: 1px solid #2f2f2f;
    background: #535353;
    color: #c8cdd8;
    font: 14px/34px "Liberation Sans", sans-serif;
    text-align: center;
}
.fs-def{
    position: absolute;
    left: 5px;
    top: 42px;
    width: 12px;
    height: 12px;
}
.fs-swap{
    position: absolute;
    left: 49px;
    top: 6px;
    width: 12px;
    height: 12px;
    color: #7a7a7a;
}
.modes{
    display: flex;
    width: 60px;
    height: 20px;
    margin: 5px 0 0 5px;
    border: 1px solid #4a4a4a;
    border-radius: 2px;
}
.mode{
    display: flex;
    align-items: center;
    justify-content: center;
    flex: 1;
    border-right: 1px solid #4a4a4a;
}
.mode i{
    width: 13px;
    height: 13px;
    border: 1px solid #000;
}
.m-color{
    background: #35cdcb;
}
.m-grad{
    background: linear-gradient(90deg, #fff, #000);
}
.m-none{
    background: linear-gradient(135deg, #fff 40%, #f00 40% 60%, #fff 60%);
}
.screens{
    height: 19px;
}
.screens svg{
    width: 13px;
    height: 13px;
}
.mode.on{
    background: #333;
}
.boards{
    display: block;
    width: 24px;
    height: 18px;
    margin: 8px 0 0 23px;
    color: #bdbdbd;
}

/* document */
.doc{
    display: flex;
    flex-direction: column;
    flex: none;
    width: 1382px;
    margin-left: 3px;
    border-right: 2px solid #3a3a3a;
}
.doctabs{
    flex: none;
    height: 28px;
    background: #424242;
    border-bottom: 1px solid #333;
}
.doctab{
    display: flex;
    align-items: center;
    width: 218px;
    height: 27px;
    padding-left: 10px;
    background: #535353;
    color: #d4d4d4;
    letter-spacing: .4px;
    white-space: nowrap;
}
.doctab b{
    margin-left: 10px;
    font: bold 9px "DejaVu Sans", sans-serif;
    color: #eee;
}
.docmid{
    position: relative;
    display: flex;
    flex: none;
    height: 841px;
    background: #5f5f5f;
}
.canvas{
    flex: none;
    width: 1364px;
    height: 841px;
    overflow: hidden;
    padding: 66px 0 0 239px;
}
.artboard{
    position: relative;
    width: 801px;
    height: 780px;
    background: #e5e1e0;
    border: 1px solid #1f1f1f;
}
.art{
    position: absolute;
    left: 187px;
    top: 151px;
    width: 320px;
    height: 180px;
}
.vscroll{
    display: flex;
    flex-direction: column;
    align-items: center;
    justify-content: space-between;
    flex: none;
    width: 16px;
    padding: 4px 0;
    background: #535353;
}
.vscroll .chev{
    color: #8a8a8a;
}
.vthumb{
    width: 13px;
    height: 24px;
    margin-top: -10px;
    border-radius: 7px;
    background: #707070;
}
.statusbar{
    display: flex;
    align-items: center;
    flex: none;
    height: 17px;
    padding-left: 4px;
    background: #535353;
    border-top: 1px solid #484848;
}
.stfield{
    height: 15px;
    background: #474747;
    color: #e4e4e4;
    font: 11px/15px "Liberation Mono", monospace;
    padding-left: 3px;
}
.zoomf{
    width: 50px;
}
.pagef{
    width: 40px;
}
.stdrop{
    display: flex;
    align-items: center;
    justify-content: center;
    width: 18px;
}
.navs{
    display: flex;
    align-items: center;
    justify-content: space-around;
    width: 42px;
    height: 15px;
    color: #777;
}
.navs i{
    position: relative;
    width: 0;
    height: 0;
    border: 5px solid transparent;
    border-left-width: 0;
    border-right: 6px solid #777;
}
.nav-first::before,.nav-last::before{
    content: "";
    position: absolute;
    left: -2px;
    top: -5px;
    width: 2px;
    height: 10px;
    background: #777;
}
.nav-next,.nav-last{
    transform: scaleX(-1);
}
.statetext{
    width: 198px;
    margin-left: 1px;
    height: 16px;
    line-height: 17px;
    text-align: center;
    color: #a8a8a8;
}
.playbtn{
    width: 0;
    height: 0;
    margin-left: 7px;
    border: 5px solid transparent;
    border-right: 0;
    border-left: 6px solid #c4c4c4;
}
.hscroll{
    display: flex;
    align-items: center;
    justify-content: space-between;
    width: 920px;
    margin-left: 12px;
    color: #a0a0a0;
    font: bold 12px/14px "DejaVu Sans", sans-serif;
}
.hthumb{
    width: 26px;
    height: 13px;
    margin-left: 6px;
    border-radius: 7px;
    background: #707070;
}

/* floating pathfinder */
.floatpanel{
    position: absolute;
    left: 1150px;
    top: 50px;
    width: 231px;
    height: 138px;
    background: #535353;
    border: 1px solid #333;
    border-top: 4px solid #383838;
    border-right: 0;
}
.tabs{
    display: flex;
    align-items: stretch;
    flex: none;
    height: 26px;
    background: #424242;
    border-bottom: 1px solid #333;
    color: #9a9a9a;
}
.tab{
    display: flex;
    align-items: center;
    justify-content: center;
    background: #4a4a4a;
    border-right: 1px solid #383838;
    white-space: nowrap;
}
.tab.on{
    height: 26px;
    background: #535353;
    color: #e6e6e6;
}
.tab em{
    margin-right: 4px;
    font: 10px "DejaVu Sans", sans-serif;
    color: #b0b0b0;
}
.w41{ width: 41px; }
.w42{ width: 42px; }
.w43{ width: 43px; }
.w48{ width: 48px; }
.w53{ width: 53px; }
.w66{ width: 66px; }
.w78{ width: 78px; }
.tab-align{
    width: 44px;
}
.tab-pf{
    width: 78px;
}
.more-r{
    margin-left: auto;
    font: bold 12px/24px "DejaVu Sans", sans-serif;
    color: #ddd;
}
.barsep{
    width: 1px;
    height: 10px;
    margin: 8px 0 0 7px;
    background: #c0c0c0;
}
.menuicon{
    flex: none;
    width: 12px;
    height: 10px;
    margin: 8px 5px 0 auto;
    color: #c8c8c8;
}
.barsep + .menuicon{
    margin-left: 6px;
}
.pf-body{
    padding: 6px 5px;
}
.pf-title{
    height: 17px;
    line-height: 17px;
    color: #a4abb4;
}
.pf-row{
    display: flex;
    align-items: center;
    color: #c4c4c4;
}
.pf{
    flex: none;
    width: 16px;
    height: 16px;
}
.modes-row{
    height: 28px;
    margin: 3px 0 4px;
    padding-left: 4px;
    gap: 21px;
}
.expand{
    width: 74px;
    height: 20px;
    margin-left: -6px;
    background: #5c5c5c;
    color: #727272;
    line-height: 20px;
    text-align: center;
}
.finders-row{
    height: 31px;
    padding-left: 7px;
    gap: 21px;
}

/* dock strip */
.dock{
    flex: none;
    width: 39px;
    margin-left: 1px;
    background: #535353;
}
.dockgroup{
    display: flex;
    flex-direction: column;
    align-items: center;
    height: 41px;
    border-bottom: 2px solid #3e3e3e;
    color: #c4c4c4;
}
.dockgroup.tall{
    height: 69px;
}
.dockgroup svg{
    flex: none;
    width: 24px;
    height: 24px;
    margin-top: 4px;
}
.dockgroup .grip + svg{
    margin-top: 3px;
}
.dockon{
    width: 28px;
    height: 23px;
    margin-top: 3px;
    padding: 2px;
    background: #333;
    border: 1px solid #555;
    border-radius: 3px;
    display: flex;
    justify-content: center;
}
.dockon svg{
    width: 19px;
    height: 19px;
    margin: 0;
}

/* right panels */
.panels{
    flex: none;
    width: 246px;
    margin-left: 1px;
}
.panel{
    display: flex;
    flex-direction: column;
    background: #535353;
    border-bottom: 1px solid #333;
}
.panel .tabs{
    margin-top: 0;
}
.p-layers{
    height: 219px;
}
.layerlist{
    flex: none;
    height: 166px;
    margin: 6px 6px 0;
    border: 1px solid #484848;
    border-radius: 2px;
}
.layerrow{
    position: relative;
    display: flex;
    align-items: center;
    height: 21px;
    background: #4b6482;
}
.eye{
    width: 13px;
    height: 10px;
    margin-left: 4px;
}
.cell{
    width: 1px;
    height: 21px;
    margin-left: 4px;
    background: #42586f;
}
.cell + .colorbar{
    margin-left: 21px;
}
.colorbar{
    width: 3px;
    height: 19px;
    background: #4a7cff;
}
.laychev{
    width: 8px;
    height: 10px;
    margin-left: 7px;
}
.thumb{
    width: 18px;
    height: 18px;
    margin-left: 9px;
    border: 1px solid #000;
}
.layername{
    margin-left: 6px;
    color: #d0d8e0;
    word-spacing: 3px;
}
.target{
    position: absolute;
    right: 18px;
    top: 6px;
    width: 9px;
    height: 9px;
    border: 1px solid #ccc;
    border-radius: 50%;
}
.selsq{
    position: absolute;
    right: 7px;
    top: 6px;
    width: 7px;
    height: 7px;
    background: #4a7cff;
    border: 1px solid #111;
}
.dogear{
    position: absolute;
    right: 0;
    top: 0;
    border: 3px solid transparent;
    border-top-color: #ddd;
    border-right-color: #ddd;
}
.layerfoot{
    display: flex;
    align-items: center;
    height: 20px;
    padding-left: 6px;
    color: #b0b0b0;
}
.count{
    width: 95px;
}
.fi{
    flex: none;
    width: 14px;
    height: 14px;
    margin-right: 12px;
    color: #c0c0c0;
}
.fi.libs{
    margin-right: 15px;
}
.fi.wide{
    width: 22px;
    margin-left: -6px;
}
.fi.gap{
    margin-left: 8px;
}
.p-swatches{
    height: 212px;
    margin-top: 2px;
}
.swhead{
    display: flex;
    justify-content: space-between;
    flex: none;
    height: 42px;
    padding: 7px 6px 0 5px;
}
.fsmini{
    position: relative;
    width: 30px;
    height: 30px;
}
.fm-stroke{
    position: absolute;
    left: 10px;
    top: 10px;
    width: 20px;
    height: 20px;
}
.fm-fill{
    position: absolute;
    left: 0;
    top: 0;
    width: 20px;
    height: 20px;
    border: 1px solid #2f2f2f;
    background: #535353;
    font: 12px/18px "Liberation Sans", sans-serif;
    text-align: center;
}
.viewtoggle{
    display: flex;
    height: 23px;
    border: 1px solid #484848;
    border-radius: 3px;
}
.viewtoggle span{
    display: flex;
    align-items: center;
    justify-content: center;
    width: 24px;
}
.viewtoggle .on{
    background: #333;
}
.viewtoggle svg{
    width: 14px;
    height: 14px;
}
.swbox{
    position: relative;
    flex: none;
    height: 121px;
    margin: 0 6px;
    padding-top: 1px;
    border: 1px solid #484848;
}
.swrow{
    display: flex;
    height: 14px;
}
.swrow.grp{
    height: 14px;
    margin-top: 2px;
}
.sw{
    flex: none;
    width: 13px;
    height: 13px;
    margin-right: 1px;
}
.none{
    background: linear-gradient(135deg, #fff 44%, #f00 44% 56%, #fff 56%);
    background-color: #fff;
}
.reg{
    background: radial-gradient(circle, #666 0 2px, #e8e8e8 2px 4px, #666 4px 5px, #e8e8e8 5px);
}
.g-bw{
    background: linear-gradient(90deg, #000, #fff 60%, #000);
}
.g-fire{
    background: linear-gradient(90deg, #ffe600, #f39800, #e60012);
}
.g-check{
    background: conic-gradient(#2e86d0 25%, #cfe2f0 0 50%, #2e86d0 0 75%, #cfe2f0 0) 0 0/4px 4px;
}
.g-dots{
    background: radial-gradient(circle, #fff 0 3px, #999 4px, #111 6px);
}
.g-green{
    background: radial-gradient(circle, #f0f0b0 0 2px, #6fb531 3px 5px, #fff 6px);
}
.g-brown{
    background: repeating-conic-gradient(#a87a58 0 25%, #d4bca8 0 50%) 0 0/3px 3px;
}
.folder{
    flex: none;
    width: 13px;
    height: 13px;
    margin: 0 1px 0 0;
    color: #c4c4c4;
}
.swup,.swdown{
    position: absolute;
    right: 4px;
    color: #606060;
}
.swup{
    top: 3px;
}
.swdown{
    bottom: 3px;
}
.swfoot{
    display: flex;
    align-items: center;
    flex: none;
    height: 22px;
    padding-left: 10px;
}
.p-color{
    height: 209px;
    margin-top: 2px;
}
.colorbody{
    display: flex;
    flex: none;
    height: 111px;
    padding: 6px 0 0 5px;
}
.colorleft{
    flex: none;
    width: 48px;
}
.deflt{
    display: flex;
    height: 18px;
    gap: 8px;
}
.fs-def2,.swap2{
    width: 12px;
    height: 12px;
}
.swap2{
    color: #757575;
}
.sliders{
    flex: none;
    display: flex;
    flex-direction: column;
    gap: 12px;
    margin-top: 2px;
}
.slider{
    display: flex;
    align-items: center;
    height: 21px;
}
.slider b{
    width: 17px;
    font: bold 11px "Liberation Serif", serif;
    color: #b8c0c8;
}
.track{
    width: 103px;
    height: 6px;
    margin-right: 7px;
    background: #4c4c4c;
    border: 1px solid #4a4a4a;
}
.inp{
    width: 36px;
    height: 21px;
    background: #454545;
    border: 1px solid #4f4f4f;
    border-radius: 3px;
}
.colorquick{
    display: flex;
    align-items: center;
    flex: none;
    height: 22px;
    padding-left: 5px;
}
.quick{
    display: flex;
    width: 40px;
    height: 14px;
    border: 1px solid #333;
}
.quick .sw{
    margin: 0;
}
.qb{
    width: 13px;
    background: #000;
}
.qw{
    width: 13px;
    background: #fff;
}
.hash{
    margin-left: 131px;
    font: bold 11px "Liberation Mono", monospace;
    color: #a8a8a8;
}
.hexinp{
    width: 46px;
    height: 20px;
    margin-left: 0;
    background: #454545;
    border: 1px solid #4f4f4f;
    border-radius: 3px;
}
.spectrum{
    position: relative;
    width: 222px;
    height: 38px;
    margin: 6px 0 0 6px;
    border: 1px solid #333;
    background: linear-gradient(90deg, #f00, #ff0 17%, #0f0 33%, #0ff 50%, #00f 67%, #f0f 83%, #f00);
}
.spectrum i{
    position: absolute;
    inset: 0;
    background: linear-gradient(#fff, rgba(255,255,255,0) 50%, rgba(0,0,0,0) 50%, #000);
}
.p-transform{
    height: 29px;
    margin-top: 2px;
}
.p-char{
    height: 198px;
    margin-top: 3px;
}
.charbody{
    padding: 7px 6px 0 5px;
}
.touchbtn{
    display: flex;
    align-items: center;
    gap: 7px;
    width: 114px;
    height: 22px;
    padding-left: 8px;
    border: 1px solid #6a6a6a;
    border-radius: 2px;
    color: #dcdcdc;
    font-weight: 700;
}
.touchbtn svg{
    width: 16px;
    height: 16px;
}
.fontfield{
    display: flex;
    align-items: center;
    height: 21px;
    margin-top: 5px;
    background: #484848;
    border: 1px solid #4f4f4f;
    border-radius: 2px;
    color: #e4e4e4;
    font: 11px "Liberation Mono", "Noto Sans CJK SC", monospace;
}
.stylefield{
    display: flex;
    align-items: center;
    justify-content: space-between;
    height: 20px;
    margin-top: 5px;
    padding: 0 6px;
    background: #484848;
    border: 1px solid #4f4f4f;
    border-radius: 2px;
    color: #ddd;
}
.hr{
    display: block;
    height: 2px;
    margin-top: 6px;
    background: #4a4a4a;
}
.chargrid{
    display: grid;
    grid-template-columns: 101px 110px;
    justify-content: space-between;
    row-gap: 6px;
    margin-top: 6px;
}
.cf{
    display: flex;
    align-items: stretch;
    height: 20px;
}
.cficon{
    flex: none;
    width: 20px;
    height: 20px;
    margin-right: 1px;
}
.cf:nth-child(even) .cficon{
    margin: 0 3px 0 9px;
    width: 17px;
}
.cf .stepper{
    background: #484848;
    border: 1px solid #4f4f4f;
    border-radius: 2px 0 0 2px;
}
.cfval{
    flex: 1;
    padding-left: 4px;
    background: #484848;
    border-top: 1px solid #4f4f4f;
    border-bottom: 1px solid #4f4f4f;
    color: #e0e0e0;
    font: 11px/18px "Liberation Mono", "Noto Sans CJK SC", monospace;
    white-space: nowrap;
}
.cfval.tight{
    padding-left: 2px;
    font-size: 10px;
    letter-spacing: -.3px;
}
.cf .drop{
    background: #484848;
    border: 1px solid #4f4f4f;
    border-radius: 0 2px 2px 0;
}

/* speed widget */
.netpill{
    position: absolute;
    left: 1689px;
    top: 804px;
    display: flex;
    flex-direction: column;
    justify-content: space-around;
    width: 62px;
    height: 41px;
    padding: 0 1px 0 16px;
    background: #2c3340;
}
.netrow{
    display: flex;
    align-items: center;
    justify-content: space-between;
    font: 11px "Liberation Sans", sans-serif;
    color: #c0c8d0;
}
.netarrow{
    width: 8px;
    height: 8px;
}
.net-up{
    fill: #2f9fe0;
}
.net-down{
    fill: #27a745;
}
.netball{
    position: absolute;
    left: 1644px;
    top: 796px;
    width: 58px;
    height: 58px;
    border-radius: 50%;
    background: #2d3542;
    box-shadow: 0 0 0 1px #1f2530;
}
.netball svg{
    position: absolute;
    inset: 0;
    width: 58px;
    height: 58px;
}
.pct{
    position: absolute;
    left: 12px;
    top: 12px;
    font: 300 26px/32px Roboto, "Liberation Sans", sans-serif;
    letter-spacing: -.5px;
    color: #dfe4ea;
    white-space: nowrap;
}
.pct small{
    font-size: 10px;
    letter-spacing: 0;
    margin-left: 2px;
}
```
